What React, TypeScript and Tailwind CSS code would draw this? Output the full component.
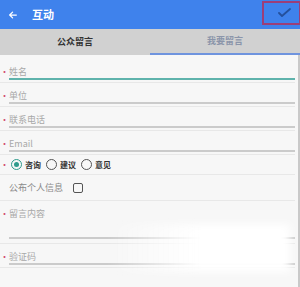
import React from 'react';

const font = { fontFamily: '"Noto Sans CJK SC", "Noto Sans", sans-serif' };

function Dot() {
  return <span className="w-[9px] flex justify-center text-[#d24a6a] text-[9px] leading-none">•</span>;
}

function Field({ label, active, tall }: { label: string; active?: boolean; tall?: boolean }) {
  return (
    <div className={`flex items-start border-b border-[#e8e8e8] ${tall ? 'h-[43px]' : 'h-[24px]'}`}>
      <div className="w-[9px] pt-[8px] flex justify-center">
        <Dot />
      </div>
      <div className="flex-1 flex flex-col">
        <div className={`text-[9px] leading-none text-[#a8a8a8] pt-[8px] ${tall ? 'h-[36px]' : 'h-[19px]'}`}>{label}</div>
        <div className={`h-[2px] ${active ? 'bg-[#5fb3ac]' : 'bg-[#cbcbcb]'}`} />
      </div>
    </div>
  );
}

function Radio({ checked, label }: { checked?: boolean; label: string }) {
  return (
    <div className="flex items-center gap-[3px]">
      <span
        className={`w-[11px] h-[11px] rounded-full border-[1.5px] flex items-center justify-center ${
          checked ? 'border-[#2f9b8c]' : 'border-[#555]'
        }`}
      >
        {checked && <span className="w-[5px] h-[5px] rounded-full bg-[#2f9b8c]" />}
      </span>
      <span className="text-[8px] leading-none text-[#333] font-bold">{label}</span>
    </div>
  );
}

export default function App() {
  return (
    <div className="w-[300px] h-[287px] bg-[#f7f7f7] relative overflow-hidden" style={font}>
      <div className="h-[29px] bg-[#3f82ec] flex items-center pl-[8px] relative">
        <svg width="10" height="10" viewBox="0 0 24 24" fill="none" stroke="white" strokeWidth="3" strokeLinecap="round" strokeLinejoin="round">
          <path d="M20 12H4M11 5l-7 7 7 7" />
        </svg>
        <span className="ml-[14px] text-[11px] text-white font-bold">互动</span>
        <div className="ml-auto mr-[-1px] w-[39px] h-[24px] mt-[-4px] border-2 border-[#9c3e78] flex items-center justify-center pl-[6px]">
          <svg width="13" height="9" viewBox="0 0 13 9" fill="none" stroke="#24509c" strokeWidth="1.8" strokeLinecap="round" strokeLinejoin="round">
            <path d="M1 5l3 3 8-7" />
          </svg>
        </div>
      </div>
      <div className="h-[26px] bg-[#d1d1d1] flex">
        <div className="flex-1 flex items-center justify-center text-[9px] font-bold text-[#333]">公众留言</div>
        <div className="flex-1 flex flex-col">
          <div className="flex-1 flex items-center justify-center text-[9px] text-[#8b95aa] font-bold">我要留言</div>
          <div className="h-[2px] bg-[#6f94de]" />
        </div>
      </div>
      <div className="pt-[4px] pr-[3px] border-r-2 border-[#c9c9c9] h-full">
        <Field label="姓名" active />
        <Field label="单位" />
        <Field label="联系电话" />
        <Field label="Email" />
        <div className="h-[20px] flex items-center border-b border-[#e8e8e8]">
          <Dot />
          <div className="flex items-center gap-[5px] ml-[2px]">
            <Radio checked label="咨询" />
            <Radio label="建议" />
            <Radio label="意见" />
          </div>
        </div>
        <div className="h-[26px] flex items-center border-b border-[#e8e8e8] pl-[9px]">
          <span className="text-[9px] text-[#8a8a8a]">公布个人信息</span>
          <span className="ml-[10px] w-[10px] h-[10px] border-[1.5px] border-[#555] rounded-[2px]" />
        </div>
        <Field label="留言内容" tall />
        <Field label="验证码" />
      </div>
      <div className="absolute left-[108px] top-[224px] w-[182px] h-[48px] bg-gradient-to-r from-transparent via-white to-white blur-[4px]" />
    </div>
  );
}
